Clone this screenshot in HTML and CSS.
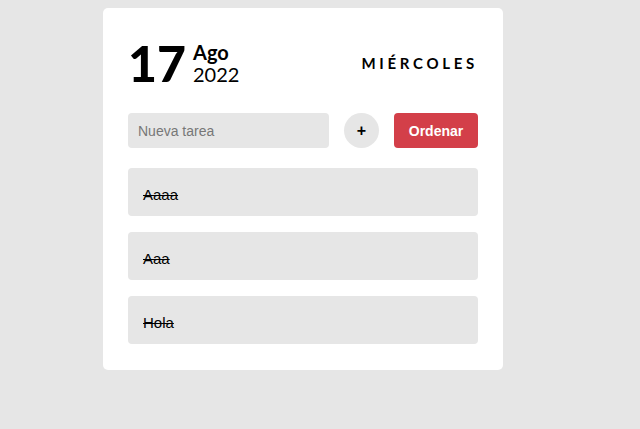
FILE: index.html
```html
<!DOCTYPE html>
<html lang="es">
<head>
<meta charset="utf-8">
<link rel="stylesheet" href="styles.css">
</head>
<body>
<div class="page">
  <div class="card">
    <div class="header">
      <div class="date">
        <div class="day">17</div>
        <div class="month-year">
          <div class="month">Ago</div>
          <div class="year">2022</div>
        </div>
      </div>
      <div class="weekday">MIÉRCOLES</div>
    </div>
    <form class="new-task">
      <input class="task-input" type="text" placeholder="Nueva tarea">
      <button class="add-btn" type="button">+</button>
      <button class="sort-btn" type="button">Ordenar</button>
    </form>
    <div class="tasks">
      <div class="task done">Aaaa</div>
      <div class="task done">Aaa</div>
      <div class="task done">Hola</div>
    </div>
  </div>
</div>
</body>
</html>
```
FILE: styles.css
```css
html, body {
  margin: 0;
  padding: 0;
  background: #e6e6e6;
}
body {
  font-family: "Liberation Sans", Arial, sans-serif;
}
.page {
  padding: 8px 0 0 103px;
}
.card {
  width: 400px;
  box-sizing: border-box;
  background: #fff;
  border-radius: 5px;
  padding: 25px 25px 26px 25px;
}
.header {
  display: flex;
  align-items: center;
  justify-content: space-between;
  height: 60px;
  margin-bottom: 20px;
}
.date {
  display: flex;
  align-items: center;
  font-family: Lato, sans-serif;
  color: #000;
}
.day {
  font-size: 50px;
  font-weight: 900;
  line-height: 1;
  margin-right: 7px;
}
.month-year {
  display: flex;
  flex-direction: column;
  line-height: 1.1;
}
.month {
  font-size: 20px;
  font-weight: 700;
}
.year {
  font-size: 20px;
  font-weight: 400;
}
.weekday {
  font-family: Lato, sans-serif;
  font-weight: 700;
  font-size: 15px;
  letter-spacing: 3.7px;
  margin-right: 0;
  color: #000;
}
.new-task {
  display: flex;
  align-items: center;
  gap: 15px;
  margin: 0;
}
.task-input {
  width: 201px;
  height: 35px;
  box-sizing: border-box;
  border: none;
  border-radius: 4px;
  background: #e6e6e6;
  padding: 0 10px;
  font-family: "Liberation Sans", Arial, sans-serif;
  font-size: 14px;
  color: #333;
  outline: none;
}
.task-input::placeholder {
  color: #777;
}
.add-btn {
  width: 35px;
  height: 35px;
  border-radius: 50%;
  border: none;
  background: #e6e6e6;
  font-family: "Liberation Sans", Arial, sans-serif;
  font-weight: 700;
  font-size: 16px;
  color: #000;
  padding: 0;
  line-height: 35px;
}
.sort-btn {
  width: 84px;
  height: 35px;
  border: none;
  border-radius: 4px;
  background: #d33f49;
  color: #fff;
  font-family: "Liberation Sans", Arial, sans-serif;
  font-weight: 700;
  font-size: 14px;
  padding: 0;
}
.tasks {
  display: flex;
  flex-direction: column;
  gap: 16px;
  margin-top: 20px;
}
.task {
  height: 48px;
  box-sizing: border-box;
  background: #e6e6e6;
  border-radius: 4px;
  padding: 4px 15px 0;
  display: flex;
  align-items: center;
  font-size: 15px;
  color: #000;
}
.task.done {
  text-decoration: line-through;
}
```
